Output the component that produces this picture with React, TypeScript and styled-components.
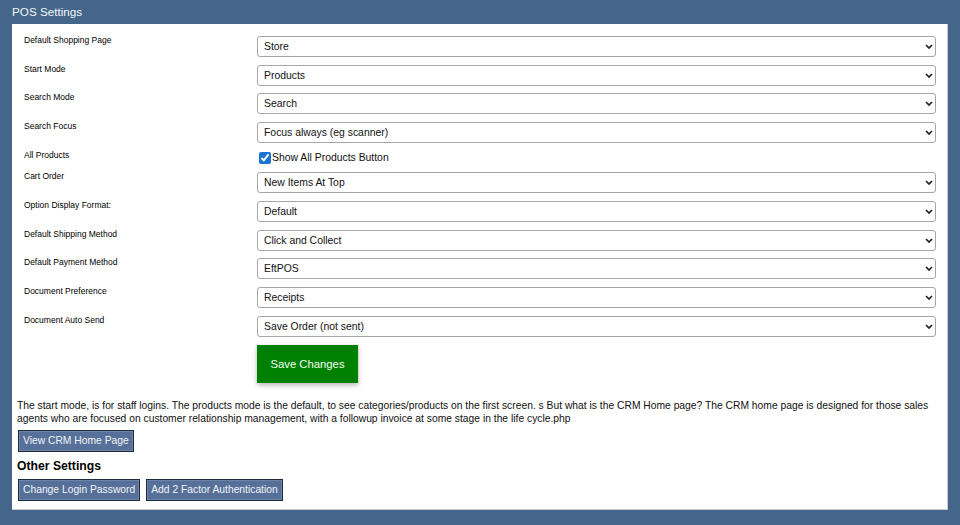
import React from "react";
import styled, { createGlobalStyle } from "styled-components";

const Global = createGlobalStyle`
  html, body { margin: 0; padding: 0; }
  body {
    background: #44668a;
    font-family: Arial, "Liberation Sans", sans-serif;
    width: 960px;
    height: 525px;
    overflow: hidden;
  }
`;

const Page = styled.div`
  display: flex;
  flex-direction: column;
  padding: 0 12px;
`;

const Title = styled.div`
  height: 24px;
  line-height: 24px;
  color: #f2f5f9;
  font-size: 11.7px;
`;

const Panel = styled.div`
  background: #ffffff;
  border-right: 1px solid #c8ccd2;
  border-bottom: 1px solid #c8ccd2;
  padding: 12px 11px 9px 5px;
  height: 486px;
  box-sizing: border-box;
`;

const FormGrid = styled.div`
  display: grid;
  grid-template-columns: 233px 1fr;
  row-gap: 7.67px;
  padding-left: 7px;
`;

const Label = styled.div`
  font-size: 8.5px;
  color: #000;
  line-height: 8px;
  align-self: start;
`;

const SelectWrap = styled.div`
  position: relative;
  height: 21px;
`;

const Select = styled.select`
  appearance: none;
  -webkit-appearance: none;
  display: block;
  height: 21px;
  width: 100%;
  font-family: Arial, "Liberation Sans", sans-serif;
  font-size: 10.4px;
  color: #111;
  background: #fff;
  border: 1px solid #a6a6a6;
  border-radius: 3px;
  padding: 0 6px;
  box-sizing: border-box;
`;

const Chevron = styled.svg`
  position: absolute;
  right: 3px;
  top: 8px;
  width: 8px;
  height: 5px;
  pointer-events: none;
`;

const CheckLabel = styled.label`
  display: flex;
  align-items: center;
  gap: 1px;
  height: 14px;
  font-size: 10.4px;
  color: #111;
`;

const Check = styled.input`
  width: 12px;
  height: 12px;
  margin: 0 0 0 2px;
  accent-color: #1a73d1;
`;

const SaveButton = styled.button`
  grid-column: 2;
  justify-self: start;
  margin-top: 1px;
  width: 101px;
  height: 38px;
  background: #008000;
  color: #f4fff4;
  border: none;
  font-family: Arial, "Liberation Sans", sans-serif;
  font-size: 11.3px;
  box-shadow: 0 2px 5px rgba(0, 0, 0, 0.3);
`;

const Info = styled.p`
  margin: 17px 0 0 0;
  font-size: 10.3px;
  line-height: 12.3px;
  color: #111;
`;

const ActionButton = styled.button`
  height: 22px;
  padding: 0 4px;
  background: #56709a;
  color: #f2f4f7;
  border: 1px solid #1f2b3b;
  box-shadow: inset 0 0 0 1px #6c84a7;
  font-family: Arial, "Liberation Sans", sans-serif;
  font-size: 10.3px;
`;

const ButtonRow = styled.div<{ $top: number }>`
  display: flex;
  gap: 6px;
  margin-top: ${(p) => p.$top}px;
  padding-left: 1px;
`;

const Heading = styled.h3`
  margin: 6px 0 0 0;
  font-size: 12.2px;
  font-weight: bold;
  color: #000;
  line-height: 16px;
`;

const rows: { label: string; value?: string; check?: boolean }[] = [
  { label: "Default Shopping Page", value: "Store" },
  { label: "Start Mode", value: "Products" },
  { label: "Search Mode", value: "Search" },
  { label: "Search Focus", value: "Focus always (eg scanner)" },
  { label: "All Products", check: true },
  { label: "Cart Order", value: "New Items At Top" },
  { label: "Option Display Format:", value: "Default" },
  { label: "Default Shipping Method", value: "Click and Collect" },
  { label: "Default Payment Method", value: "EftPOS" },
  { label: "Document Preference", value: "Receipts" },
  { label: "Document Auto Send", value: "Save Order (not sent)" },
];

export default function App() {
  return (
    <>
      <Global />
      <Page>
        <Title>POS Settings</Title>
        <Panel>
          <FormGrid>
            {rows.map((r) => (
              <React.Fragment key={r.label}>
                <Label>{r.label}</Label>
                {r.check ? (
                  <CheckLabel>
                    <Check type="checkbox" defaultChecked />
                    Show All Products Button
                  </CheckLabel>
                ) : (
                  <SelectWrap>
                    <Select defaultValue={r.value}>
                      <option>{r.value}</option>
                    </Select>
                    <Chevron viewBox="0 0 8 5">
                      <path d="M1 1 L4 4 L7 1" fill="none" stroke="#222" strokeWidth="1.7" />
                    </Chevron>
                  </SelectWrap>
                )}
              </React.Fragment>
            ))}
            <SaveButton>Save Changes</SaveButton>
          </FormGrid>
          <Info>
            The start mode, is for staff logins. The products mode is the default, to see
            categories/products on the first screen. s But what is the CRM Home page? The CRM
            home page is designed for those sales agents who are focused on customer relationship
            management, with a followup invoice at some stage in the life cycle.php
          </Info>
          <ButtonRow $top={5}>
            <ActionButton>View CRM Home Page</ActionButton>
          </ButtonRow>
          <Heading>Other Settings</Heading>
          <ButtonRow $top={5}>
            <ActionButton>Change Login Password</ActionButton>
            <ActionButton>Add 2 Factor Authentication</ActionButton>
          </ButtonRow>
        </Panel>
      </Page>
    </>
  );
}
